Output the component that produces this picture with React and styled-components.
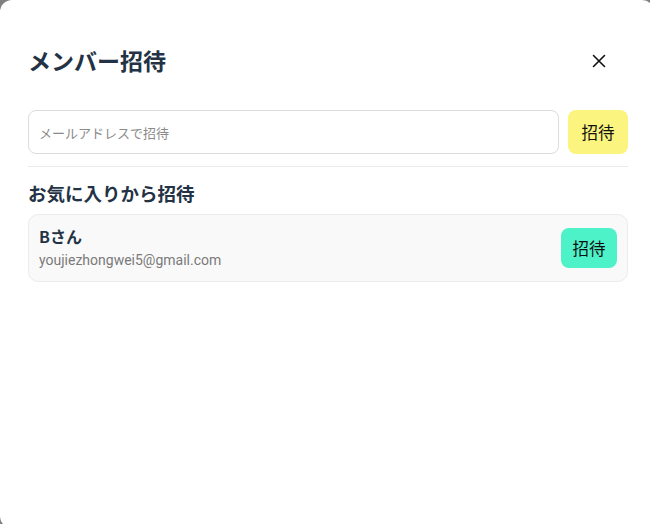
import React from "react";
import styled, { createGlobalStyle } from "styled-components";

const Global = createGlobalStyle`
  html, body { margin: 0; padding: 0; background: #808080; overflow: hidden; }
  body { font-family: "Noto Sans CJK JP", "Noto Sans", sans-serif; }
  * { box-sizing: border-box; }
`;

const Modal = styled.div`
  width: 654px;
  height: 528px;
  background: #fff;
  border-radius: 12px;
  padding: 39px 26px 0 28px;
  display: flex;
  flex-direction: column;
`;

const Header = styled.div`
  display: flex;
  align-items: center;
  justify-content: space-between;
  height: 44px;
`;

const Title = styled.h2`
  margin: 0;
  font-size: 23px;
  font-weight: 700;
  color: #233345;
  line-height: 30px;
  margin-top: -2px;
`;

const CloseButton = styled.button`
  width: 28px;
  height: 28px;
  border: none;
  background: transparent;
  padding: 0;
  margin-right: 15px;
  margin-top: 0;
  display: flex;
  align-items: center;
  justify-content: center;
  cursor: pointer;
`;

const InviteRow = styled.div`
  display: flex;
  gap: 9px;
  margin-top: 27px;
  width: 600px;
`;

const EmailInput = styled.input`
  flex: 1;
  height: 44px;
  border: 1px solid #dcdcdc;
  border-radius: 8px;
  padding: 0 10px;
  font-family: "Noto Sans CJK JP", sans-serif;
  font-size: 13px;
  color: #333;
  outline: none;
  &::placeholder { color: #8a8a8a; }
`;

const InviteButton = styled.button`
  width: ${(p) => p.$w}px;
  height: ${(p) => p.$h}px;
  border: none;
  border-radius: 8px;
  background: ${(p) => p.$bg};
  color: #111;
  font-family: "Noto Sans CJK JP", sans-serif;
  font-size: 16.5px;
  padding: 0;
  cursor: pointer;
  flex-shrink: 0;
`;

const Divider = styled.hr`
  width: 600px;
  margin: 12px 0 0;
  border: none;
  border-top: 1px solid #ebebeb;
`;

const SectionTitle = styled.h3`
  margin: 13px 0 0;
  font-size: 18.5px;
  font-weight: 700;
  color: #233345;
  line-height: 26px;
`;

const Card = styled.div`
  width: 600px;
  height: 68px;
  margin-top: 8px;
  border: 1px solid #ececec;
  background: #f9f9f9;
  border-radius: 10px;
  display: flex;
  align-items: center;
  justify-content: space-between;
  padding: 0 10px 0 10px;
`;

const Info = styled.div`
  display: flex;
  flex-direction: column;
  gap: 4px;
`;

const Name = styled.div`
  font-size: 16px;
  font-weight: 700;
  color: #233345;
  line-height: 22px;
  margin-top: -2px;
`;

const Email = styled.div`
  font-family: "Roboto", "Noto Sans", sans-serif;
  font-size: 14px;
  color: #7a7a7a;
  line-height: 18px;
`;

export default function App() {
  return (
    <>
      <Global />
      <Modal>
        <Header>
          <Title>メンバー招待</Title>
          <CloseButton aria-label="close">
            <svg width="14" height="14" viewBox="0 0 14 14">
              <path d="M1.5 1.5 L12.5 12.5 M12.5 1.5 L1.5 12.5" stroke="#111" strokeWidth="1.6" strokeLinecap="round" />
            </svg>
          </CloseButton>
        </Header>
        <InviteRow>
          <EmailInput placeholder="メールアドレスで招待" />
          <InviteButton $bg="#fbf47e" $w={60} $h={44}>招待</InviteButton>
        </InviteRow>
        <Divider />
        <SectionTitle>お気に入りから招待</SectionTitle>
        <Card>
          <Info>
            <Name>Bさん</Name>
            <Email>youjiezhongwei5@gmail.com</Email>
          </Info>
          <InviteButton $bg="#4ef2c8" $w={56} $h={40}>招待</InviteButton>
        </Card>
      </Modal>
    </>
  );
}
